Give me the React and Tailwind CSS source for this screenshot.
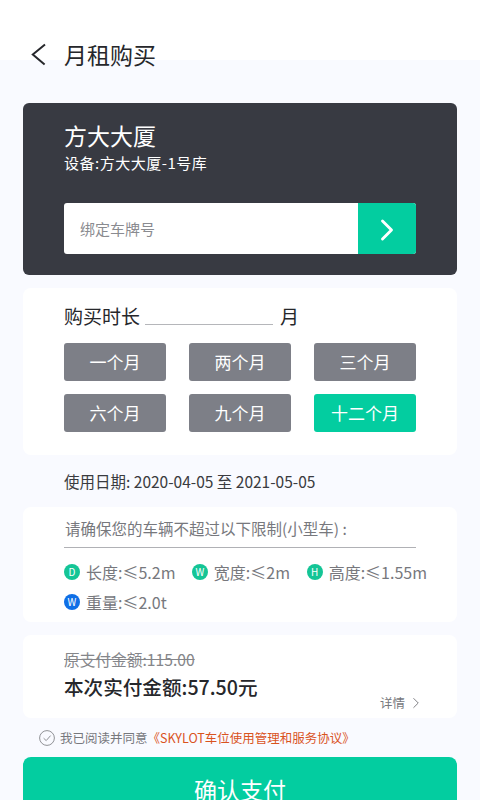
import React from "react";
import { ChevronRight } from "lucide-react";

const months = ["一个月", "两个月", "三个月", "六个月", "九个月", "十二个月"];

function Badge({ letter, blue }) {
    return (
        <span className={`flex h-4 w-4 shrink-0 items-center justify-center rounded-full text-[10px] leading-none text-white ${blue ? "bg-[#0f6fe6]" : "bg-[#14c596]"}`}>
            {letter}
        </span>
    );
}

function Limit({ letter, blue, label, className }) {
    return (
        <div className={`flex items-center gap-[6px] ${className || ""}`}>
            <Badge letter={letter} blue={blue} />
            <span className="whitespace-nowrap">{label}</span>
        </div>
    );
}

export default function App() {
    return (
        <div className="relative h-[800px] w-[480px] overflow-hidden bg-[#f9faff] font-['Noto_Sans_CJK_SC','Noto_Sans',sans-serif] text-[#26272b]">
            {/* Header */}
            <div className="flex h-[60px] items-start bg-white pl-[31px] pt-[43px]">
                <svg width="15" height="23" viewBox="0 0 15 23" fill="none" className="shrink-0">
                    <path d="M14 1.5 1.8 11.5 13.6 21.5" stroke="#26272b" strokeWidth="2" />
                </svg>
                <span className="ml-[18px] -mt-[7px] text-[23px] leading-[36px] whitespace-nowrap">月租购买</span>
            </div>

            <div className="flex flex-col px-[23px] pt-[43px]">
                {/* Dark card */}
                <div className="flex h-[172px] flex-col rounded-[6px] bg-[#383a42] pl-[41px] pr-[41px] pt-[16px] text-white">
                    <div className="text-[23px] leading-[32px]">方大大厦</div>
                    <div className="mt-[1px] text-[15px] leading-[22px] tracking-[0.5px]">设备:方大大厦-1号库</div>
                    <div className="mt-[29px] flex h-[51px] overflow-hidden rounded-[3px] bg-white">
                        <div className="flex flex-1 items-center pl-[16px] pt-[2px] text-[15px] text-[#8a8b90]">绑定车牌号</div>
                        <div className="flex w-[58px] items-center justify-center bg-[#03cda0] pt-[2px]">
                            <ChevronRight size={36} strokeWidth={1.9} className="text-white" />
                        </div>
                    </div>
                </div>

                {/* Duration card */}
                <div className="mt-[13px] h-[167px] rounded-[8px] bg-white pl-[41px] pr-[41px] pt-[14px]">
                    <div className="flex h-[27px] items-center text-[19px] leading-[27px]">
                        <span className="whitespace-nowrap">购买时长</span>
                        <span className="ml-[5px] mt-[18px] h-[1px] w-[128px] bg-[#b5b6ba]"></span>
                        <span className="ml-[7px]">月</span>
                    </div>
                    <div className="mt-[14px] grid grid-cols-3 gap-x-[23px] gap-y-[13px]">
                        {months.map((m, i) => (
                            <div
                                key={m}
                                className={`flex h-[38px] items-center justify-center rounded-[3px] text-[17px] text-white ${i === 5 ? "bg-[#03cda0]" : "bg-[#7d7f87]"}`}
                            >
                                {m}
                            </div>
                        ))}
                    </div>
                </div>

                {/* Date */}
                <div className="mt-[15px] h-[22px] pl-[41px] text-[15.5px] leading-[22px] text-[#3a3b40]">使用日期:&nbsp;2020-04-05 至 2021-05-05</div>

                {/* Limits card */}
                <div className="mt-[15px] h-[115px] rounded-[8px] bg-white pl-[41px] pr-[30px] pt-[9px] text-[15.5px] text-[#77787d]">
                    <div className="mr-[11px] h-[32px] border-b border-[#b0b1b5] pl-[1px] leading-[24px]">请确保您的车辆不超过以下限制(小型车) :</div>
                    <div className="mt-[13px] flex h-[22px] items-center text-[16px] leading-[22px]">
                        <Limit letter="D" label="长度:≤5.2m" className="w-[128px]" />
                        <Limit letter="W" label="宽度:≤2m" className="w-[115px]" />
                        <Limit letter="H" label="高度:≤1.55m" />
                    </div>
                    <div className="mt-[8px] flex h-[22px] items-center text-[16px] leading-[22px]">
                        <Limit blue letter="W" label="重量:≤2.0t" />
                    </div>
                </div>

                {/* Price card */}
                <div className="relative mt-[13px] h-[83px] rounded-[8px] bg-white pl-[41px] pt-[14px]">
                    <div className="text-[15.7px] leading-[22px] text-[#85868a] line-through">原支付金额:115.00</div>
                    <div className="mt-[2px] text-[19.6px] font-medium leading-[28px]">本次实付金额:57.50元</div>
                    <div className="absolute left-[357px] top-[59px] flex items-center text-[12.5px] leading-[18px] text-[#77787d]">
                        详情
                        <ChevronRight size={18} strokeWidth={1.25} className="ml-[2px]" />
                    </div>
                </div>

                {/* Agreement */}
                <div className="mt-[9px] flex h-[22px] items-center pl-[16px] text-[12.5px] text-[#77787d]">
                    <svg width="16" height="16" viewBox="0 0 16 16" fill="none" className="shrink-0">
                        <circle cx="8" cy="8" r="7.4" stroke="#85868a" strokeWidth="0.9" />
                        <path d="M4.6 8.2 7.2 10.6 11.6 5.6" stroke="#85868a" strokeWidth="0.9" />
                    </svg>
                    <span className="ml-[5px] whitespace-nowrap">我已阅读并同意</span>
                    <span className="whitespace-nowrap text-[#d9531e]">《SKYLOT车位使用管理和服务协议》</span>
                </div>

                {/* Confirm */}
                <div className="mt-[8px] flex h-[66px] items-start justify-center rounded-t-[8px] bg-[#03cda0] pt-[12px] text-[23px] leading-[40px] text-white">确认支付</div>
            </div>
        </div>
    );
}
